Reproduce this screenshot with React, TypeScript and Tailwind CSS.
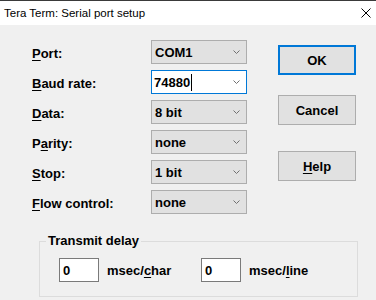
import React from "react";

const Chevron = () => (
  <svg width="7" height="4" viewBox="0 0 7 4" className="block">
    <path d="M0.5 0.5 L3.5 3.5 L6.5 0.5" fill="none" stroke="#707070" strokeWidth="1" />
  </svg>
);

type RowProps = { pre: string; ul: string; post: string; value: string; focused?: boolean };

const Row = ({ pre, ul, post, value, focused }: RowProps) => (
  <div className="flex h-[24px]">
    <div className="w-[119px] h-[24px] pt-[6px] leading-[15px]">
      {pre}
      <span className="underline underline-offset-[2px]">{ul}</span>
      {post}
    </div>
    {focused ? (
      <div className="w-[96px] h-[24px] border border-[#0078d7] bg-white flex items-center justify-between pl-[2px] pr-[6px]">
        <div className="flex items-center leading-[15px]">
          {value}
          <span className="w-px h-[17px] bg-black ml-[1px]" />
        </div>
        <Chevron />
      </div>
    ) : (
      <div className="w-[96px] h-[24px] border border-[#adadad] bg-[#e1e1e1] flex items-center justify-between pl-[3px] pr-[6px] leading-[15px]">
        <span>{value}</span>
        <Chevron />
      </div>
    )}
  </div>
);

export default function App() {
  return (
    <div className="w-[376px] h-[300px] overflow-hidden bg-[#f0f0f0] flex flex-col font-['Liberation_Sans',Arial,sans-serif] text-black">
      <div className="h-[25px] bg-white border-t border-[#3a3a3a] flex items-center justify-between pl-[4px] pr-[5px] shrink-0">
        <span className="text-[11.5px] font-normal leading-[14px]">Tera Term: Serial port setup</span>
        <svg width="10" height="10" viewBox="0 0 10 10" className="block">
          <path d="M0.5 0.5 L9.5 9.5 M9.5 0.5 L0.5 9.5" stroke="#000" strokeWidth="1" fill="none" />
        </svg>
      </div>
      <div className="flex text-[13px] font-bold">
        <div className="pl-[32px] pt-[15px] flex flex-col gap-[6px]">
          <Row pre="" ul="P" post="ort:" value="COM1" />
          <Row pre="" ul="B" post="aud rate:" value="74880" focused />
          <Row pre="" ul="D" post="ata:" value="8 bit" />
          <Row pre="P" ul="a" post="rity:" value="none" />
          <Row pre="" ul="S" post="top:" value="1 bit" />
          <Row pre="" ul="F" post="low control:" value="none" />
        </div>
        <div className="ml-[31px] pt-[20px] flex flex-col">
          <div className="w-[78px] h-[30px] border-2 border-[#0078d7] bg-[#e1e1e1] flex items-center justify-center leading-[15px]">
            OK
          </div>
          <div className="mt-[20px] w-[78px] h-[30px] border border-[#adadad] bg-[#e1e1e1] flex items-center justify-center leading-[15px]">
            Cancel
          </div>
          <div className="mt-[26px] w-[78px] h-[30px] border border-[#adadad] bg-[#e1e1e1] flex items-center justify-center leading-[15px]">
            <span>
              <span className="underline underline-offset-[2px]">H</span>elp
            </span>
          </div>
        </div>
      </div>
      <fieldset className="ml-[39px] mt-[19px] w-[319px] border border-[#dcdcdc] text-[13px] font-bold pb-[14px]">
        <legend className="ml-[6px] px-[2px] leading-[16px]">Transmit delay</legend>
        <div className="flex items-center pl-[19px] pt-[9px]">
          <div className="w-[142px] flex items-center">
            <div className="w-[40px] h-[24px] border border-[#7a7a7a] bg-white flex items-center pl-[3px] leading-[15px]">0</div>
            <span className="ml-[8px] leading-[15px]">
              msec/<span className="underline underline-offset-[2px]">c</span>har
            </span>
          </div>
          <div className="flex items-center">
            <div className="w-[40px] h-[24px] border border-[#7a7a7a] bg-white flex items-center pl-[3px] leading-[15px]">0</div>
            <span className="ml-[8px] leading-[15px]">
              msec/<span className="underline underline-offset-[2px]">l</span>ine
            </span>
          </div>
        </div>
      </fieldset>
    </div>
  );
}
